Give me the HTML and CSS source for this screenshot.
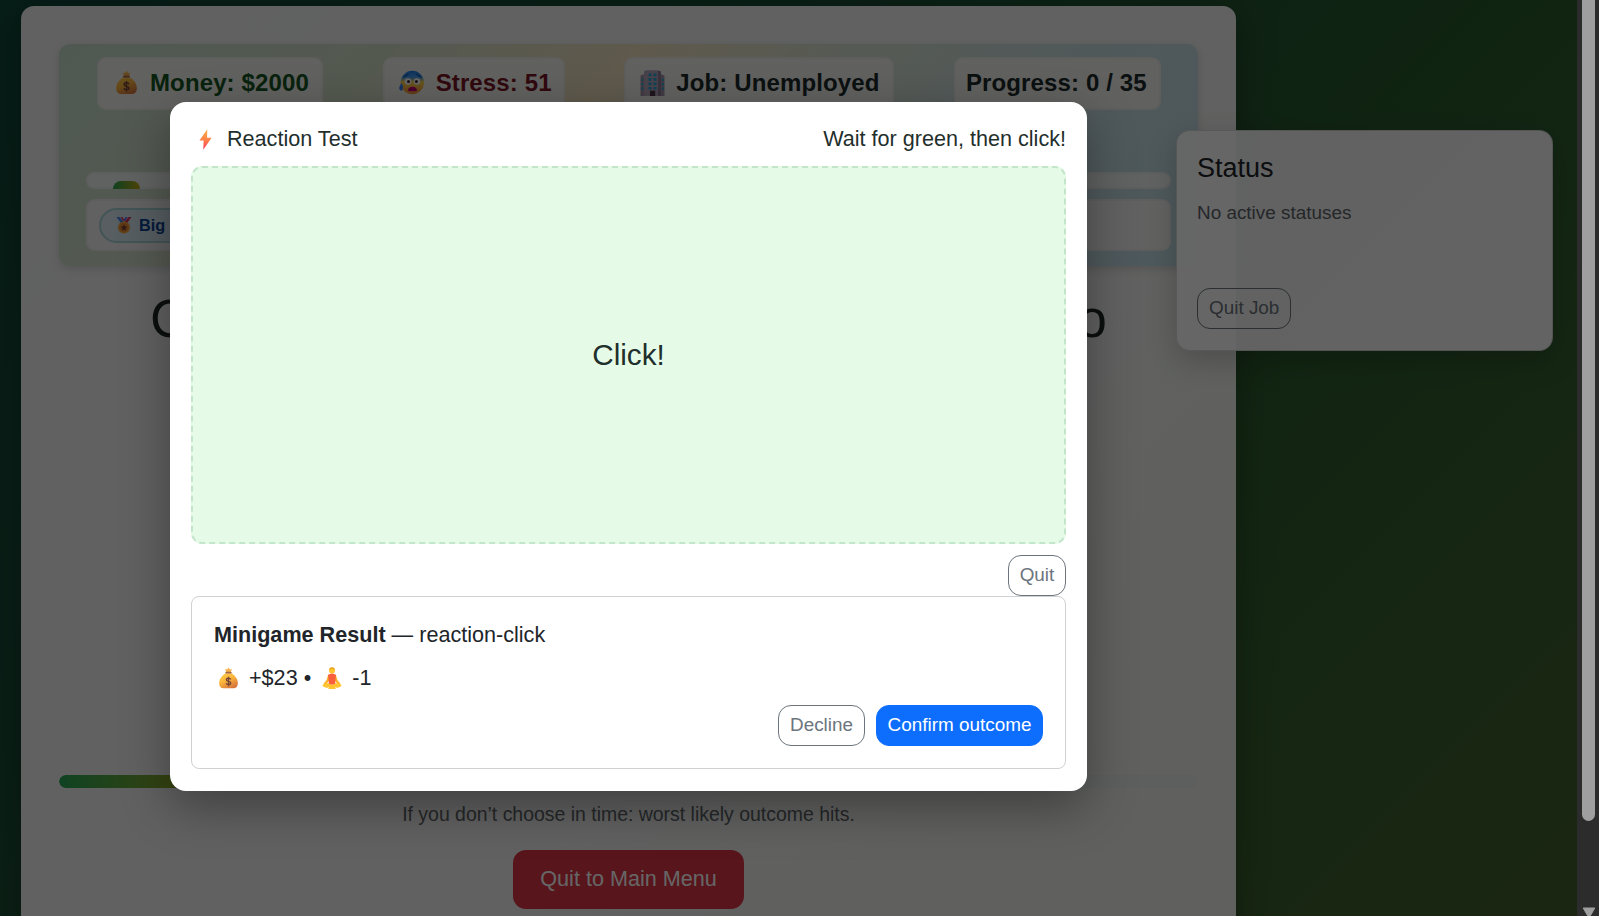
FILE: index.html
```html
<!DOCTYPE html>
<html lang="en">
<head>
<meta charset="utf-8">
<title>Reaction Test</title>
<link rel="stylesheet" href="styles.css">
</head>
<body>
<svg class="defs" width="0" height="0" aria-hidden="true">
  <defs>
    <linearGradient id="gold" x1="0" y1="0" x2=".6" y2="1"><stop offset="0" stop-color="#ffd04a"/><stop offset=".5" stop-color="#fbb63c"/><stop offset="1" stop-color="#d9783c"/></linearGradient>
    <linearGradient id="face" x1="0" y1="0" x2="0" y2="1"><stop offset="0" stop-color="#1f7fe8"/><stop offset=".28" stop-color="#4a9cf0"/><stop offset=".48" stop-color="#ffd548"/><stop offset="1" stop-color="#f2913c"/></linearGradient>
    <linearGradient id="bolt" x1="0" y1="0" x2="0" y2="1"><stop offset="0" stop-color="#fbb040"/><stop offset=".5" stop-color="#ff8349"/><stop offset="1" stop-color="#f8365c"/></linearGradient>
    <symbol id="i-bag" viewBox="0 0 22 25">
      <path d="M7 2l2.300.8L11 .3l1.700 2.500L15 2l-1.700 4.500H8.700z" fill="#f9b34a"/>
      <path d="M8 7h6c4.500 2.500 7.800 6.500 7.800 11.500 0 3.800-2 6-5 6H5.200c-3 0-5-2.200-5-6C.2 13.500 3.500 9.500 8 7z" fill="url(#gold)"/>
      <rect x="7.300" y="5.300" width="7.400" height="2" rx="1" fill="#a5654b"/>
      <path d="M13.600 14.300c-.4-1.100-1.300-1.500-2.600-1.500-1.500 0-2.500.6-2.500 1.800 0 2.600 5.100 1.100 5.100 3.700 0 1.300-1.100 1.900-2.600 1.900-1.400 0-2.400-.5-2.700-1.700M11 11v11" fill="none" stroke="#754638" stroke-width="1.500"/>
    </symbol>
    <symbol id="i-face" viewBox="0 0 25 25">
      <circle cx="13.300" cy="12.500" r="11.700" fill="url(#face)"/>
      <path d="M2.600 13c1.500 2.500 2 6 .7 7.300-1.300 1.100-3-.1-3-2.300 0-1.900 1.200-3.400 2.300-5z" fill="#3c80f0"/>
      <path d="M5 7l4-2.500M18 4.500L22 7" stroke="#17529d" stroke-width="1.300" stroke-linecap="round"/>
      <circle cx="9" cy="11.500" r="3.300" fill="#fff"/><circle cx="17.900" cy="11.500" r="3.300" fill="#fff"/>
      <circle cx="9.500" cy="11.500" r="1.500" fill="#40252f"/><circle cx="17.400" cy="11.500" r="1.500" fill="#40252f"/>
      <path d="M9 20.700c0-2.500 2-4 4.500-4s4.500 1.500 4.500 4c-1.500.8-7.500.8-9 0z" fill="#c00074"/>
    </symbol>
    <symbol id="i-office" viewBox="0 0 25 26">
      <path d="M.5 5.500L4.500 4v22h-4zM20 4l4.500 1.500V26H20z" fill="#a394aa"/>
      <path d="M4 1.500L6 .3h11L20 1.500V26H4z" fill="#b5a6ba"/>
      <path d="M18 .6l3 1V26h-3z" fill="#8e7b96"/>
      <path d="M8.500 3.500h3v2.700h-3zM13.500 3.500h3v2.700h-3zM8.500 8h3v2.700h-3zM13.500 8h3v2.700h-3zM8.500 12.500h3v2.700h-3zM13.500 12.500h3v2.700h-3zM8.500 17h3v2.500h-3zM13.500 17h3v2.500h-3zM1.500 8.500h1.700v2.500H1.500zM1.500 13h1.700v2.500H1.500zM1.500 17.500h1.700V20H1.500zM22 8.500h1.700v2.500H22zM22 13h1.700v2.500H22zM22 17.500h1.700V20H22z" fill="#28a5d5"/>
      <path d="M10 20.700h5.200V26H10z" fill="#493545"/>
    </symbol>
    <symbol id="i-medal" viewBox="0 0 16 18">
      <path d="M.5 1h3L8 6.500 5.500 8z" fill="#4488e8"/><path d="M15.500 1h-3L8 6.500 10.500 8z" fill="#e0325f"/>
      <path d="M4.500 1h2l2 3-1.200 1.500z" fill="#d83a70"/><path d="M11.500 1h-2L7.800 4 9 5.500z" fill="#5c70e8"/>
      <circle cx="8" cy="11.500" r="6" fill="#f3a03a"/><circle cx="8" cy="11.500" r="4.300" fill="#e48b35"/>
      <path d="M8 8.300l1 2.100 2.300.3-1.700 1.600.4 2.300-2-1.100-2 1.100.4-2.300-1.700-1.600 2.300-.3z" fill="#7a4037"/>
    </symbol>
    <symbol id="i-bolt" viewBox="0 0 13 21"><path d="M8.300.2L.4 11.500h4.200L4.300 20.800 12.600 8.800H8z" fill="url(#bolt)"/></symbol>
    <symbol id="i-yoga" viewBox="0 0 20 22">
      <path d="M6 8c-.8 3-1.200 6-4.500 8.500L3 18c4-2.500 4.300-5.500 5-8z" fill="#fbb52d"/><path d="M14 8c.8 3 1.200 6 4.500 8.500L17 18c-4-2.500-4.300-5.500-5-8z" fill="#fbb52d"/>
      <path d="M.3 18C4 15.500 7 15.500 10 18c3-2.500 6-2.500 9.700 0-1 2.800-4 2.800-7 2.500L14 22H6l1.300-1.500c-3 .3-6 .3-7-2.500z" fill="#ffc430"/>
      <path d="M6 7.800L10 6.300l4 1.500-.8 8.700c-1.500 1.500-4.900 1.500-6.400 0z" fill="#f8613c"/>
      <circle cx="10" cy="3.400" r="3" fill="#ffc62c"/><path d="M7.200 2.700C7.500-.5 12.500-.5 12.800 2.700L10 1.800z" fill="#e6a020"/>
    </symbol>
  </defs>
</svg>
<div class="screen">
  <main class="game">
    <section class="hud">
      <div class="stats">
        <div class="stat stat-money"><svg class="ic-bag"><use href="#i-bag"/></svg><span>Money: $2000</span></div>
        <div class="stat stat-stress"><svg class="ic-face"><use href="#i-face"/></svg><span>Stress: 51</span></div>
        <div class="stat stat-job"><svg class="ic-office"><use href="#i-office"/></svg><span>Job: Unemployed</span></div>
        <div class="stat stat-progress"><span>Progress: 0 / 35</span></div>
      </div>
      <div class="meter"><div class="meter-fill"></div></div>
      <div class="badges"><div class="badge"><svg class="ic-medal"><use href="#i-medal"/></svg><span>Big</span></div></div>
    </section>
    <h1 class="headline"><span>C</span><span>o</span></h1>
    <div class="timer"><div class="timer-fill"></div></div>
    <p class="hint">If you don’t choose in time: worst likely outcome hits.</p>
    <button class="quit-main">Quit to Main Menu</button>
  </main>
  <aside class="status">
    <h2>Status</h2>
    <p>No active statuses</p>
    <button class="btn btn-outline">Quit Job</button>
  </aside>
  <div class="overlay">
    <div class="modal">
      <header class="modal-head">
        <div class="modal-title"><svg class="ic-bolt"><use href="#i-bolt"/></svg><span>Reaction Test</span></div>
        <div class="modal-tip">Wait for green, then click!</div>
      </header>
      <div class="arena">Click!</div>
      <div class="arena-actions"><button class="btn btn-outline btn-quit">Quit</button></div>
      <section class="result">
        <div class="result-title"><strong>Minigame Result</strong> — reaction-click</div>
        <div class="result-row"><svg class="ic-bag-sm"><use href="#i-bag"/></svg><span>+$23 •</span><svg class="ic-yoga"><use href="#i-yoga"/></svg><span>-1</span></div>
        <div class="result-actions"><button class="btn btn-outline btn-decline">Decline</button><button class="btn btn-primary">Confirm outcome</button></div>
      </section>
    </div>
  </div>
</div>
<div class="scrollbar"><div class="thumb"></div><svg class="arrow" viewBox="0 0 14 11"><path d="M1.200 1h11.600L8.500 8.500q-1.500 1.500-3 0z" fill="#9f9f9f" stroke="#9f9f9f" stroke-linejoin="round"/></svg></div>
</body>
</html>
```
FILE: styles.css
```css
* { box-sizing: border-box; }
html, body { height: 100%; }
body {
  margin: 0;
  display: flex;
  overflow: hidden;
  font-family: "Liberation Sans", Arial, sans-serif;
  font-size: 21.6px;
  line-height: 32px;
  color: #212529;
}
svg { flex: none; display: block; }
.defs { position: absolute; }
h1, h2, p { margin: 0; font-weight: 400; }
button { font: inherit; margin: 0; }

.screen {
  position: relative;
  flex: 1;
  height: 916px;
  overflow: hidden;
  padding: 6px 0 0 21px;
  background: linear-gradient(135deg, #12483a 0%, #194d38 30%, #28592f 58%, #35602f 78%, #435f2c 100%);
}

.game {
  width: 1215px;
  height: 1000px;
  padding: 38px 38px 0 38px;
  border-radius: 13px;
  background: linear-gradient(135deg, #f2f2f2 0%, #eff2f0 40%, #f0f3ed 100%);
  box-shadow: 0 10px 40px rgba(0, 0, 0, .3);
  display: flex;
  flex-direction: column;
}
.hud {
  height: 222px;
  padding: 13px 26px 14px 27px;
  border-radius: 11px;
  background: linear-gradient(135deg, #c5dfcd 0%, #d3dfc9 25%, #efdfbf 43%, #d9e1d0 57%, #c8dee2 77%, #c0dde6 100%);
  box-shadow: 0 3px 8px rgba(0, 0, 0, .13);
  display: flex;
  flex-direction: column;
}
.stats { display: flex; justify-content: space-between; padding: 0 11px; height: 53px; }
.stat {
  display: flex;
  align-items: center;
  height: 53px;
  padding-bottom: 2px;
  border-radius: 9px;
  background: #f3f2ef;
  box-shadow: inset 0 0 0 2px rgba(0, 0, 0, .03);
  font-size: 24px;
  font-weight: 700;
  letter-spacing: .12px;
  white-space: nowrap;
}
.stat-money { width: 226px; padding-left: 19px; gap: 13px; color: #145523; }
.stat-stress { width: 182px; padding-left: 16px; gap: 12px; color: #781827; }
.stat-job { width: 270px; padding-left: 16px; gap: 11px; color: #1d2a2c; }
.stat-progress { width: 207px; padding-left: 12px; color: #1d2a2c; }
.ic-bag { width: 21px; height: 25px; }
.ic-face { width: 25px; height: 25px; }
.ic-office { width: 25px; height: 26px; }
.meter {
  height: 17px;
  margin: 62px 1px 0 0;
  padding: 9px 0 0 27px;
  border-radius: 9px;
  background: #f1f3f2;
  box-shadow: inset 0 0 0 2px rgba(0, 0, 0, .03);
  overflow: hidden;
}
.meter-fill { width: 27px; height: 16px; border-radius: 9px; background: linear-gradient(90deg, #28a751, #c5a812); }
.badges { margin: 10px 1px 0 0; height: 52px; padding: 9px 13px; border-radius: 9px; background: #f3f3f2; box-shadow: inset 0 0 0 2px rgba(0, 0, 0, .03); }
.badge {
  width: 150px;
  height: 35px;
  padding: 0 0 2px 15px;
  display: flex;
  align-items: center;
  gap: 7px;
  border: 2px solid #a5d1d8;
  border-radius: 18px;
  background: linear-gradient(90deg, #dcebf2, #cce3f4);
  color: #0d4594;
  font-size: 16.3px;
  font-weight: 700;
}
.ic-medal { width: 16px; height: 18px; }

.headline {
  display: flex;
  justify-content: space-between;
  margin: 21px 91px 0 91px;
  height: 65px;
  font-size: 53.3px;
  line-height: 64px;
  color: #1d2a27;
}
.timer { margin-top: 423px; height: 13px; border-radius: 7px; background: #e9ebeb; overflow: hidden; }
.timer-fill { width: 375px; height: 13px; border-radius: 7px; background: linear-gradient(90deg, #28a757, #a7a71c 40%, #ffc107); }
.hint { margin-top: 10px; text-align: center; font-size: 19.44px; line-height: 32px; color: #5c6268; }
.quit-main {
  align-self: center;
  width: 231px;
  height: 59px;
  margin-top: 20px;
  padding-bottom: 3px;
  border: 0;
  border-radius: 13px;
  background: #dc3545;
  color: #fff;
  font-size: 21.6px;
}

.status {
  position: absolute;
  left: 1176px;
  top: 130px;
  width: 377px;
  height: 221px;
  padding: 20px 20px;
  border: 1px solid rgba(0, 0, 0, .14);
  border-radius: 14px;
  background: rgba(255, 255, 255, .95);
  box-shadow: 0 10px 30px rgba(0, 0, 0, .2);
}
.status h2 { font-size: 27px; line-height: 35px; }
.status p { margin-top: 11px; margin-bottom: 59px; font-size: 18.9px; line-height: 32px; color: #5c6268; }

.btn {
  height: 41px;
  padding: 0 11px 2px;
  border: 1px solid #6c757d;
  border-radius: 13px;
  font-size: 18.9px;
  line-height: 28px;
  background: transparent;
  color: #6c757d;
  white-space: nowrap;
}
.btn-primary { background: #0d6efd; border-color: #0d6efd; color: #fff; width: 167px; }
.btn-decline { width: 87px; }
.btn-quit { width: 58px; padding-inline: 0; }
.result-actions .btn { padding: 0 0 1px; }

.overlay { position: absolute; inset: 0; background: rgba(0, 0, 0, .6); }
.modal {
  width: 917px;
  height: 689px;
  margin: 102px 0 0 170px;
  padding: 21px;
  border-radius: 16px;
  background: #fff;
  box-shadow: 0 16px 48px rgba(0, 0, 0, .35);
}
.modal-head { display: flex; justify-content: space-between; height: 43px; line-height: 32px; color: #1f2f2c; }
.modal-title { display: flex; align-items: center; height: 32px; gap: 15px; padding-left: 8px; }
.ic-bolt { width: 13px; height: 21px; }
.arena {
  height: 378px;
  border: 2px dashed #c3e6cb;
  border-radius: 11px;
  background: #e6fbe7;
  display: flex;
  align-items: center;
  justify-content: center;
  font-size: 29.7px;
  color: #1f2f2c;
}
.arena-actions { display: flex; justify-content: flex-end; padding-top: 11px; }
.result { height: 173px; padding: 22px; border: 1px solid #d0d1d3; border-radius: 8px; }
.result-title { white-space: nowrap; }
.result-row { display: flex; align-items: center; height: 32px; margin-top: 11px; padding-left: 5px; }
.ic-bag-sm { width: 19px; height: 22px; margin-right: 11px; }
.ic-yoga { width: 20px; height: 22px; margin: 0 10px 0 11px; }
.result-actions { display: flex; justify-content: flex-end; gap: 11px; margin-top: 11px; }

.scrollbar { position: relative; width: 22px; height: 916px; padding-left: 5px; background: #2c2c2c; overflow: hidden; }
.thumb { width: 13px; height: 841px; margin-top: -20px; border-radius: 7px; background: #9f9f9f; }
.arrow { width: 14px; height: 11px; margin-top: 86px; }
```
